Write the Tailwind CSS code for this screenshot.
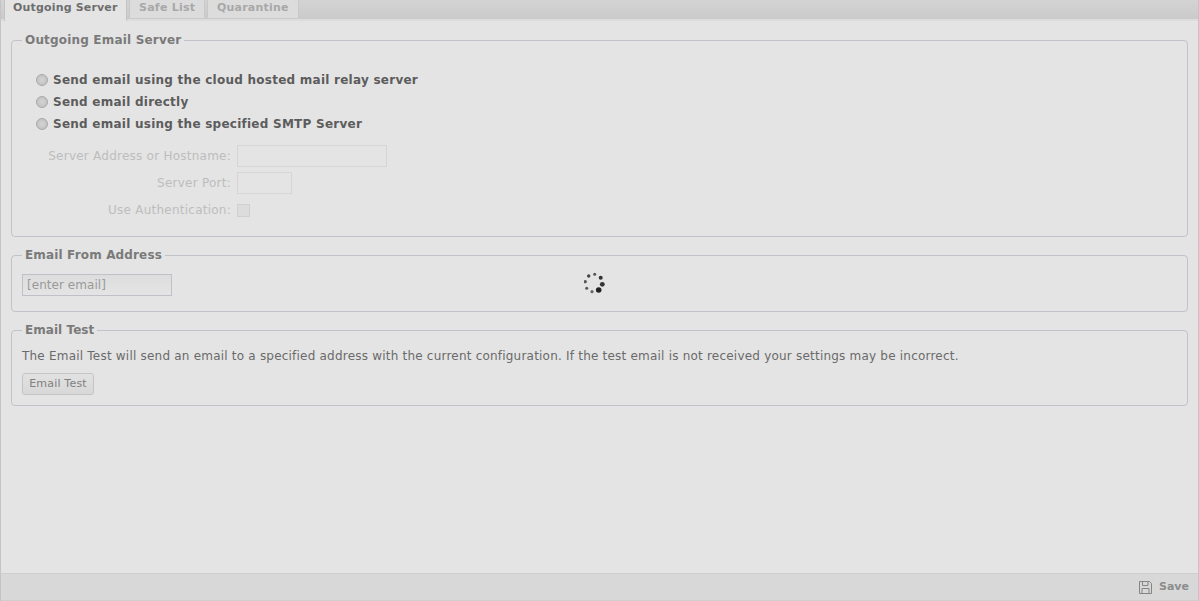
<!DOCTYPE html>
<html lang="en">
<head>
    <meta charset="UTF-8" />
    <title>Email Settings</title>
    <script src="https://cdn.jsdelivr.net/npm/@tailwindcss/browser@4"></script>
</head>
<body class="bg-[#e4e4e4] font-['DejaVu_Sans',sans-serif] text-[12px] tracking-[0.21px] text-[#666666] overflow-hidden">
<div class="relative h-[601px] w-[1199px] flex flex-col border-x border-[#c4c4c4]">
    <!-- tabs -->
    <div class="h-[21px] shrink-0 flex pl-[3px] gap-[2px] border-b-2 border-[#dcdcdc] bg-gradient-to-b from-[#d4d4d4] to-[#cacaca]">
        <div class="h-[21px] w-[123px] pl-[8px] bg-[#e4e4e4] border-x border-[#c4c4c4] font-bold text-[11px] leading-[15px] tracking-[0.17px] text-[#6e6e6e]">Outgoing Server</div>
        <div class="h-[18px] w-[76px] pl-[9px] bg-[#dcdcdc] border-x border-[#c8c8c8] font-bold text-[11px] leading-[15px] tracking-[0.25px] text-[#a8a8a8]">Safe List</div>
        <div class="h-[18px] w-[92px] pl-[9px] bg-[#dcdcdc] border-x border-[#c8c8c8] font-bold text-[11px] leading-[15px] tracking-[0.2px] text-[#a8a8a8]">Quarantine</div>
    </div>

    <div class="flex-1 px-[10px] pt-[12px]">
        <fieldset class="border border-[#c2c2ca] rounded-[4px] px-[10px] h-[204px]">
            <legend class="px-[3px] font-bold text-[12px] tracking-[0.18px] leading-[15px] text-[#7a7a7a]">Outgoing Email Server</legend>
            <div class="pt-[24px] flex flex-col gap-[6px]">
                <label class="flex items-center h-[16px] gap-[5px] font-bold tracking-[0.25px] text-[#5c5c5c]"><span class="w-[12px] h-[12px] ml-[14px] rounded-full border border-[#a8a8a8] bg-radial from-[#d4d4d4] to-[#bcbcbc]"></span>Send email using the cloud hosted mail relay server</label>
                <label class="flex items-center h-[16px] gap-[5px] font-bold tracking-[0.25px] text-[#5c5c5c]"><span class="w-[12px] h-[12px] ml-[14px] rounded-full border border-[#a8a8a8] bg-radial from-[#d4d4d4] to-[#bcbcbc]"></span>Send email directly</label>
                <label class="flex items-center h-[16px] gap-[5px] font-bold tracking-[0.25px] text-[#5c5c5c]"><span class="w-[12px] h-[12px] ml-[14px] rounded-full border border-[#a8a8a8] bg-radial from-[#d4d4d4] to-[#bcbcbc]"></span>Send email using the specified SMTP Server</label>
            </div>
            <div class="mt-[13px] grid grid-cols-[209px_auto] gap-x-[6px] tracking-[0.24px] text-[#bdbdbd] justify-start items-center">
                <div class="text-right h-[22px] leading-[22px]">Server Address or Hostname:</div>
                <div class="w-[150px] h-[22px] border border-[#d6d6d6]"></div>
                <div class="text-right h-[22px] mt-[5px] leading-[22px]">Server Port:</div>
                <div class="w-[55px] h-[22px] mt-[5px] border border-[#d6d6d6]"></div>
                <div class="text-right h-[22px] mt-[5px] leading-[22px]">Use Authentication:</div>
                <div class="w-[13px] h-[13px] mt-[5px] border border-[#d0d0d0] bg-[#dcdcdc]"></div>
            </div>
        </fieldset>

        <fieldset class="mt-[11px] border border-[#c2c2ca] rounded-[4px] px-[10px] h-[64px]">
            <legend class="px-[3px] font-bold text-[12px] tracking-[0.15px] leading-[15px] text-[#7a7a7a]">Email From Address</legend>
            <div class="mt-[11px] w-[150px] h-[22px] px-[4px] border border-[#c0c0c8] tracking-[0.05px] text-[#999999] leading-[20px] bg-gradient-to-b from-[#dddddd] to-[#e4e4e4]">[enter email]</div>
        </fieldset>

        <fieldset class="mt-[11px] border border-[#c2c2ca] rounded-[4px] px-[10px] h-[83px]">
            <legend class="px-[3px] font-bold text-[12px] tracking-[0.05px] leading-[15px] text-[#7a7a7a]">Email Test</legend>
            <p class="mt-[10px] leading-[16px] text-[#6a6a6a]">The Email Test will send an email to a specified address with the current configuration. If the test email is not received your settings may be incorrect.</p>
            <button class="block mt-[9px] w-[72px] h-[22px] border border-[#c4c4c4] rounded-[3px] bg-gradient-to-b from-[#e2e2e2] to-[#d8d8d8] text-[11px] tracking-[0.2px] text-[#808080]">Email Test</button>
        </fieldset>
    </div>

    <!-- footer -->
    <div class="h-[28px] shrink-0 flex items-center justify-end gap-[6px] pr-[9px] border-y border-[#cfcfcf] bg-[#d8d8d8]">
        <svg width="15" height="15" viewBox="0 0 15 15" fill="none" stroke="#858585" stroke-width="1"><path d="M1.5 1.5h10l2 2v10h-12z"/><path d="M4.5 1.5v4h5.5v-4"/><path d="M4 13.5v-5h7v5"/></svg>
        <span class="font-bold text-[11px] tracking-[0px] text-[#8c8c8c]">Save</span>
    </div>

    <!-- loading spinner over the form -->
    <svg class="absolute left-[583px] top-[271px]" width="24" height="24" viewBox="0 0 24 24">
        <circle cx="10.7" cy="3.3" r="1.5" fill="#555"/>
        <circle cx="4.7" cy="5" r="1.7" fill="#444"/>
        <circle cx="1.3" cy="10.7" r="1.6" fill="#555"/>
        <circle cx="2.7" cy="17.3" r="1.5" fill="#555"/>
        <circle cx="8" cy="20.7" r="1.6" fill="#666"/>
        <circle cx="14.7" cy="19" r="2.8" fill="#222"/>
        <circle cx="18.3" cy="13.3" r="2.4" fill="#333"/>
        <circle cx="16.7" cy="6.7" r="2" fill="#333"/>
    </svg>
</div>
</body>
</html>
